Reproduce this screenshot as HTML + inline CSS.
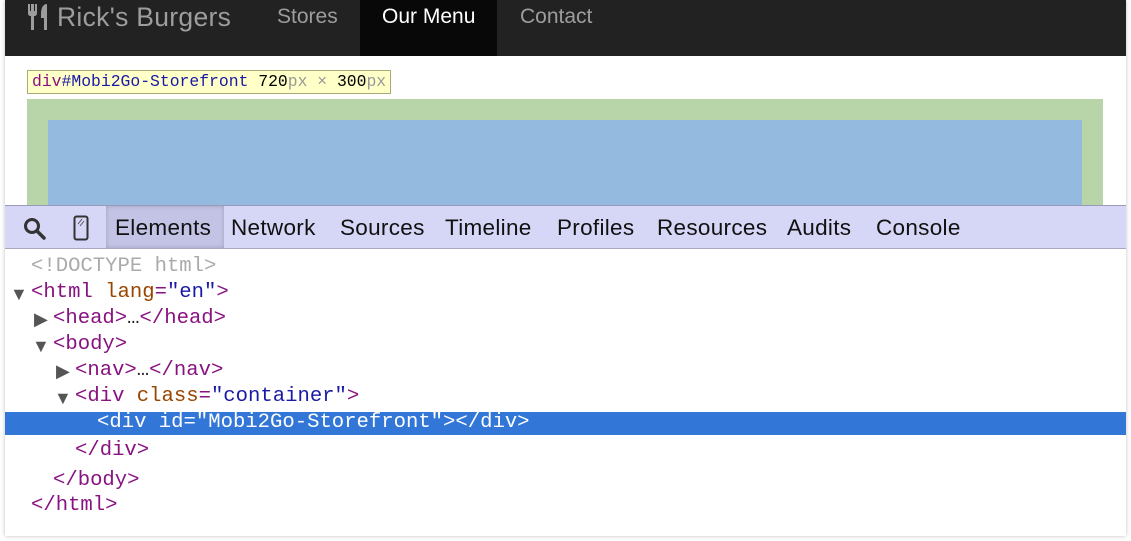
<!DOCTYPE html>
<html><head><style>
*{margin:0;padding:0;box-sizing:border-box}
body{width:1131px;height:541px;background:#fff;position:relative;overflow:hidden;font-family:"Liberation Sans",sans-serif}
.frame{position:absolute;left:5px;top:0;width:1121px;height:536px;background:#fff;box-shadow:0 0 4px rgba(0,0,0,.25)}
.nav{position:absolute;left:5px;top:0;width:1121px;height:56px;background:#222}
.nav span{position:absolute;top:5px;font-size:21px;color:#9d9d9d}
.active{position:absolute;left:355px;top:0;width:137px;height:56px;background:#080808}
.green{position:absolute;left:27px;top:99px;width:1076px;height:106px;background:#b8d4a9}
.blue{position:absolute;left:48px;top:120px;width:1034px;height:85px;background:#95badf}
.tip{position:absolute;left:27px;top:70px;height:24px;padding:0 4px;border:1px solid #a8a878;background:#ffffc8;font:16.4px/22px "Liberation Mono",monospace;color:#1a1aa6;white-space:pre}
.tb{position:absolute;left:5px;top:205px;width:1121px;height:44px;background:#d6d6f7;border-top:1px solid #9a9ab8;border-bottom:1px solid #a8a8c0}
.tb span{position:absolute;top:9px;font-size:22.5px;color:#111;letter-spacing:.3px}
.el{position:absolute;left:101px;top:0;width:118px;height:42px;background:#c3c3e6;box-shadow:inset 0 0 4px rgba(0,0,0,.2)}
.code{position:absolute;font:20.6px "Liberation Mono",monospace;white-space:pre;color:#881280;line-height:24px}
.a{color:#994500}.v{color:#1a1aa6}
.sel{position:absolute;left:5px;top:412px;width:1121px;height:23px;background:#3276d8}
.tri{position:absolute;font-size:18px;color:#555;line-height:18px}
</style></head><body>
<div class="frame"></div>
<div class="nav">
<div class="active"></div>
<svg style="position:absolute;left:22px;top:4px" width="22" height="26" viewBox="0 0 22 26"><path d="M1 0v9c0 2 1 3 3 3v14h3V12c2 0 3-1 3-3V0H8v7H7V0H4v7H3V0z" fill="#9d9d9d"/><path d="M20 0c-4 0-6 4-6 10v4h3v12h3z" fill="#9d9d9d"/></svg>
<span style="left:52px;font-size:26.5px;top:2px;letter-spacing:.3px">Rick's Burgers</span>
<span style="left:272px">Stores</span>
<span style="left:377px;color:#fff">Our Menu</span>
<span style="left:515px">Contact</span>
</div>
<div class="green"></div><div class="blue"></div>
<div class="tip"><span style="color:#881280">div</span>#Mobi2Go-Storefront <span style="color:#000">720</span><span style="color:#999">px × </span><span style="color:#000">300</span><span style="color:#999">px</span></div>
<div class="tb">
<div class="el"></div>
<svg style="position:absolute;left:18px;top:11px" width="24" height="24" viewBox="0 0 24 24"><circle cx="9" cy="9" r="6.5" fill="none" stroke="#333" stroke-width="3"/><path d="M14 14l7 7" stroke="#333" stroke-width="3.5" stroke-linecap="round"/></svg>
<svg style="position:absolute;left:68px;top:9px" width="16" height="26" viewBox="0 0 16 26"><rect x="1.5" y="1.5" width="13" height="23" rx="2" fill="none" stroke="#333" stroke-width="2"/><path d="M5 9l4-5M7 11l4-5" stroke="#555" stroke-width="1"/></svg>
<span style="left:110px">Elements</span>
<span style="left:226px">Network</span>
<span style="left:335px">Sources</span>
<span style="left:440px">Timeline</span>
<span style="left:552px">Profiles</span>
<span style="left:652px">Resources</span>
<span style="left:782px">Audits</span>
<span style="left:871px">Console</span>
</div>
<div class="sel"></div>
<span class="tri" style="left:10px;top:285px">▼</span>
<span class="tri" style="left:34px;top:310px">▶</span>
<span class="tri" style="left:32px;top:337px">▼</span>
<span class="tri" style="left:56px;top:362px">▶</span>
<span class="tri" style="left:54px;top:389px">▼</span>
<div class="code" style="left:31px;top:255px;color:#aaa">&lt;!DOCTYPE html&gt;</div>
<div class="code" style="left:31px;top:281px">&lt;html <span class="a">lang</span>=<span class="v">"en"</span>&gt;</div>
<div class="code" style="left:53px;top:307px">&lt;head&gt;<span style="color:#222">…</span>&lt;/head&gt;</div>
<div class="code" style="left:53px;top:333px">&lt;body&gt;</div>
<div class="code" style="left:75px;top:359px">&lt;nav&gt;<span style="color:#222">…</span>&lt;/nav&gt;</div>
<div class="code" style="left:75px;top:385px">&lt;div <span class="a">class</span>=<span class="v">"container"</span>&gt;</div>
<div class="code" style="left:97px;top:411px;color:#fff">&lt;div id="Mobi2Go-Storefront"&gt;&lt;/div&gt;</div>
<div class="code" style="left:75px;top:439px">&lt;/div&gt;</div>
<div class="code" style="left:53px;top:469px">&lt;/body&gt;</div>
<div class="code" style="left:31px;top:494px">&lt;/html&gt;</div>
</body></html>
